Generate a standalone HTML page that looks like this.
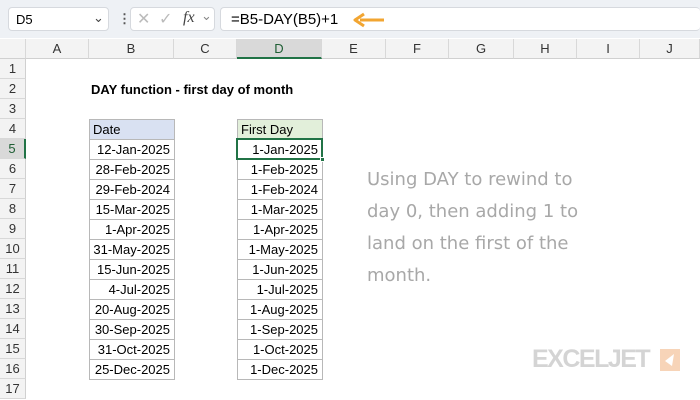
<!DOCTYPE html><html><head><style>
*{margin:0;padding:0;box-sizing:border-box}
body{width:700px;height:400px;overflow:hidden;background:#fff;font-family:"Liberation Sans",sans-serif;font-size:13px;position:relative}
.abs{position:absolute}
.top{left:0;top:0;width:700px;height:38px;background:#eef1f5}
.box{background:#fff;border:1px solid #d6d9de;border-radius:4px;height:24px;top:7px}
.ch{top:39px;height:20px;background:#f3f3f3;border-bottom:1px solid #d0d0d0;border-right:1px solid #d8d8d8;text-align:center;line-height:20px;color:#333}
.rh{left:0;width:26px;height:20px;background:#f3f3f3;border-bottom:1px solid #d8d8d8;border-right:1px solid #d0d0d0;text-align:center;line-height:20px;color:#333}
.c{height:21px;border:1px solid #b8b8b8;text-align:right;padding-right:4px;line-height:20px;color:#000;background:#fff}
.note{left:367px;font-family:"Comic Sans MS","DejaVu Sans",sans-serif;font-size:18px;color:#a8a8a8;line-height:32px;top:164px;width:330px;white-space:nowrap}
</style></head><body>
<div class="abs top"></div>
<div class="abs box" style="left:8px;width:101px"><span class="abs" style="left:7px;top:4px">D5</span><span class="abs" style="left:84px;top:2px;color:#444">&#8964;</span></div>
<div class="abs" style="left:118px;top:11px;color:#555;font-weight:bold">&#8942;</div>
<div class="abs box" style="left:130px;width:85px;color:#bbb;font-size:16px"><span class="abs" style="left:6px;top:1px">&#10005;</span><span class="abs" style="left:28px;top:1px">&#10003;</span><span class="abs" style="left:52px;top:1px;color:#444;font-family:'Liberation Serif';font-style:italic">fx</span><span class="abs" style="left:70px;top:0px;font-size:13px;color:#888">&#8964;</span></div>
<div class="abs box" style="left:220px;width:480px;border-right:none"><span class="abs" style="left:10px;top:3px;font-size:15px">=B5-DAY(B5)+1</span></div>
<svg class="abs" style="left:352px;top:12px" width="34" height="16"><path d="M32 8H8" stroke="#f2a531" stroke-width="3"/><path d="M12 2L3 8L12 14" fill="none" stroke="#f2a531" stroke-width="3" stroke-linejoin="round"/></svg>
<div class="abs ch" style="left:0;width:26px"></div>
<div class="abs ch" style="left:26px;width:63px">A</div>
<div class="abs ch" style="left:89px;width:85px">B</div>
<div class="abs ch" style="left:174px;width:63px">C</div>
<div class="abs ch" style="left:237px;width:85px;background:#d9d9d9;border-bottom:2px solid #217346;color:#1e5e34">D</div>
<div class="abs ch" style="left:322px;width:64px">E</div>
<div class="abs ch" style="left:386px;width:63px">F</div>
<div class="abs ch" style="left:449px;width:65px">G</div>
<div class="abs ch" style="left:514px;width:63px">H</div>
<div class="abs ch" style="left:577px;width:63px">I</div>
<div class="abs ch" style="left:640px;width:60px">J</div>
<div id="rows"></div>
<div class="abs" style="left:91px;top:82px;font-weight:bold">DAY function - first day of month</div>
<div class="abs c" style="left:89px;top:119px;width:86px;text-align:left;padding-left:3px;background:#d9e1f2">Date</div>
<div class="abs c" style="left:237px;top:119px;width:86px;text-align:left;padding-left:3px;background:#e2efda">First Day</div>
<div id="cells"></div>
<div class="abs note">Using DAY to rewind to<br>day 0, then adding 1 to<br>land on the first of the<br>month.</div>
<div class="abs" style="left:532px;top:345px;font-size:25px;font-weight:bold;color:#d4d4d4;letter-spacing:-1.5px">EXCELJET</div>
<div class="abs" style="left:660px;top:349px;width:20px;height:22px;background:#f7d4b8"></div>
<svg class="abs" style="left:660px;top:349px" width="20" height="22"><path d="M14 5L5 12L12 17Z" fill="#fff"/></svg>
<script>
var r='',d=['12-Jan-2025','28-Feb-2025','29-Feb-2024','15-Mar-2025','1-Apr-2025','31-May-2025','15-Jun-2025','4-Jul-2025','20-Aug-2025','30-Sep-2025','31-Oct-2025','25-Dec-2025'],f=['Jan','Feb','Feb','Mar','Apr','May','Jun','Jul','Aug','Sep','Oct','Dec'];
for(var i=1;i<=17;i++){var y=59+(i-1)*20;r+='<div class="abs rh" style="top:'+y+'px;'+(i==5?'background:#d9d9d9;color:#1e5e34;border-right:2px solid #217346':'')+'">'+i+'</div>';}
document.getElementById('rows').innerHTML=r;var c='';
for(var i=0;i<12;i++){var y=139+i*20;c+='<div class="abs c" style="left:89px;top:'+y+'px;width:86px">'+d[i]+'</div><div class="abs c" style="left:237px;top:'+y+'px;width:86px">1-'+f[i]+'-'+(i==2?'2024':'2025')+'</div>';}
c+='<div class="abs" style="left:236px;top:138px;width:87px;height:22px;border:2px solid #217346"></div><div class="abs" style="left:320px;top:157px;width:5px;height:5px;background:#217346;border:1px solid #fff"></div>';
document.getElementById('cells').innerHTML=c;
</script>
</body></html>
